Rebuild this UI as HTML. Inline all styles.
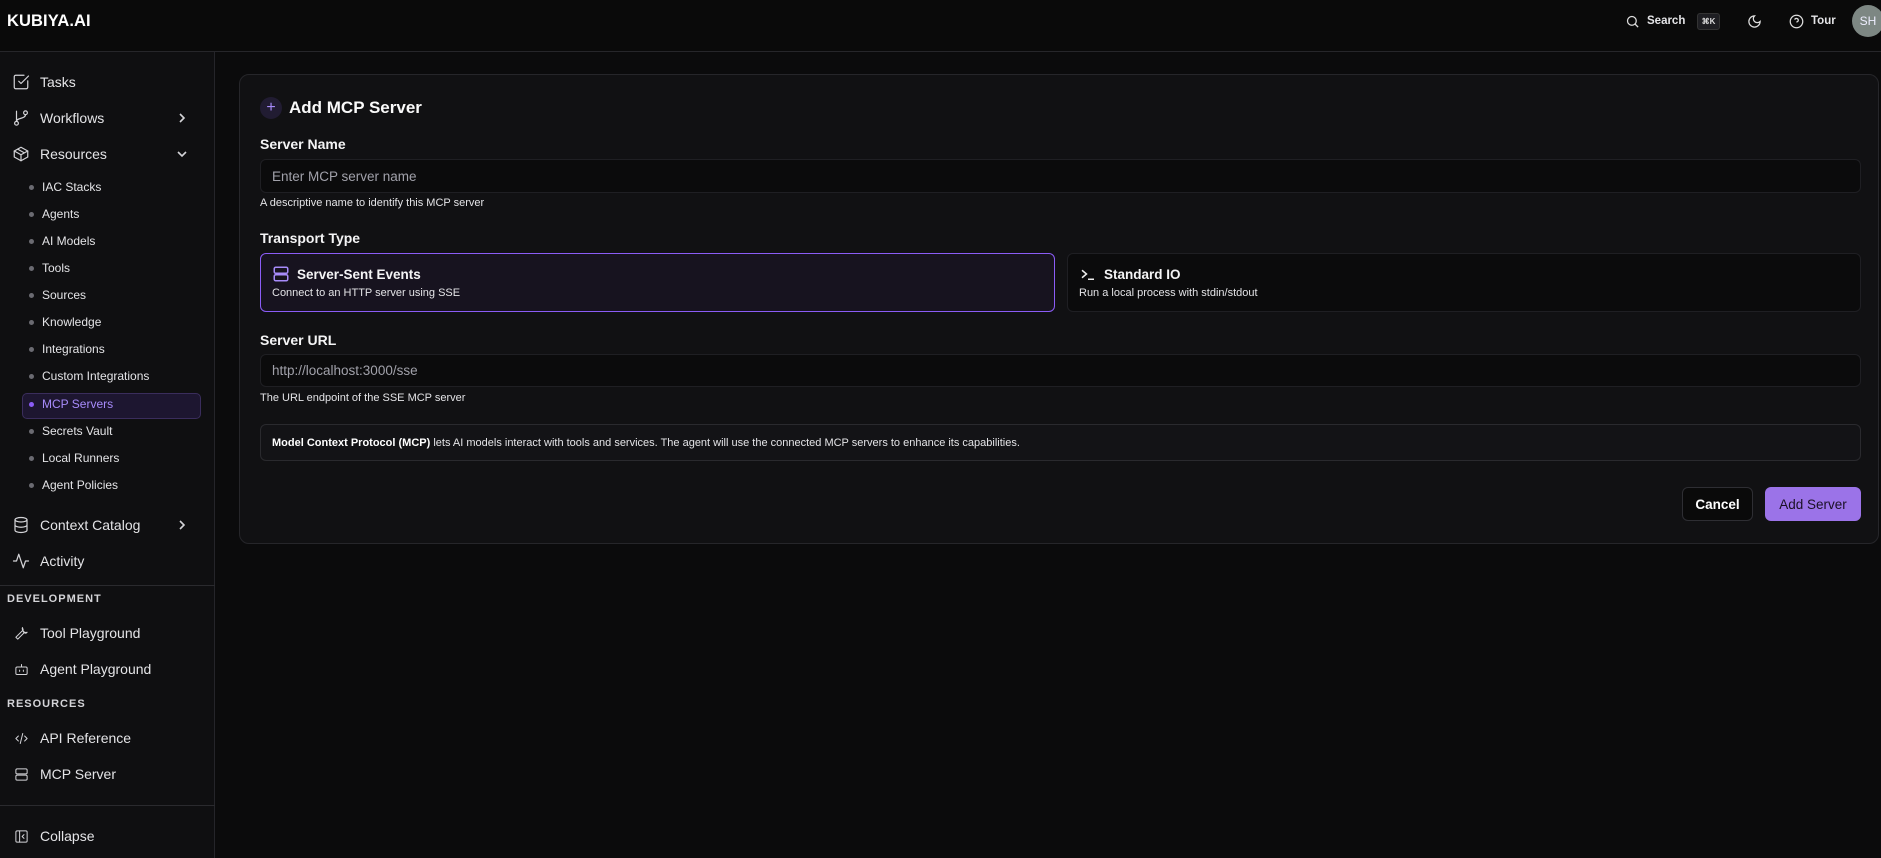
<!DOCTYPE html>
<html><head><meta charset="utf-8"><style>
*{box-sizing:border-box;margin:0;padding:0}
body{width:1881px;height:858px;overflow:hidden;background:#0b0b0c;font-family:"Liberation Sans",sans-serif;color:#ececee;position:relative}
.a{position:absolute}
.hdr{left:0;top:0;width:1881px;height:52px;background:#0a0a0a;border-bottom:1px solid #26262a}
.logo{left:7px;top:12px;font-size:16.5px;font-weight:700;color:#fff;letter-spacing:.1px}
.side{left:0;top:52px;width:215px;height:806px;background:#0f0f11;border-right:1px solid #25252a}
.ni{left:12px;font-size:14px;color:#e4e4e7;display:flex;align-items:center;height:24px}
.ni svg{width:18px;height:18px;margin-right:10px;stroke:#d4d4d8;fill:none;stroke-width:1.6;stroke-linecap:round;stroke-linejoin:round;flex:none}
.ni svg.s{width:15px;height:15px;margin:0 11px 0 2px}
.chev{left:176px;width:12px;height:12px;stroke:#d4d4d8;fill:none;stroke-width:1.6}
.si{left:29px;font-size:12px;color:#e4e4e7;display:flex;align-items:center;height:18px}
.si i{width:5px;height:5px;border-radius:50%;background:#6b6b72;margin-right:8px;display:inline-block}
.sec{left:7px;font-size:11px;font-weight:700;letter-spacing:1px;color:#d4d4d8}
.hr{left:0;width:215px;height:1px;background:#2a2a2e}
.card{left:239px;top:74px;width:1640px;height:470px;background:#111113;border:1px solid #26262a;border-radius:10px}
.lbl{left:260px;font-size:14px;font-weight:700;color:#f4f4f5}
.inp{left:260px;width:1601px;background:#0b0b0c;border:1px solid #1f1f23;border-radius:6px;font-size:13.5px;color:#a1a1aa;padding-left:11px;display:flex;align-items:center}
.help{left:260px;font-size:11px;color:#e4e4e7}
.opt{top:253px;height:59px;border-radius:6px;padding:11px 11px}
.opt .t{font-size:13.5px;font-weight:700;color:#f4f4f5;display:flex;align-items:center;height:18px}
.opt .d{font-size:11px;color:#e4e4e7;margin-top:4px}
.btn{top:487px;height:34px;border-radius:6px;font-size:13.5px;font-weight:700;display:flex;align-items:center;justify-content:center}
</style></head><body>
<div class="a hdr"></div>
<div class="a logo">KUBIYA.AI</div>
<svg class="a" style="left:1625px;top:14px" width="15" height="15" viewBox="0 0 24 24" fill="none" stroke="#ddd" stroke-width="2"><circle cx="11" cy="11" r="7"/><path d="M21 21l-5-5"/></svg>
<div class="a" style="left:1647px;top:15px;font-size:11.5px;font-weight:700;color:#e4e4e7">Search</div>
<div class="a" style="left:1697px;top:13px;width:23px;height:17px;background:#1e1e22;border:1px solid #333;border-radius:3px;font-size:8px;color:#ddd;display:flex;align-items:center;justify-content:center;font-weight:700">⌘K</div>
<svg class="a" style="left:1747px;top:14px" width="15" height="15" viewBox="0 0 24 24" fill="none" stroke="#ddd" stroke-width="2"><path d="M12 3a6 6 0 0 0 9 9 9 9 0 1 1-9-9z"/></svg>
<svg class="a" style="left:1789px;top:14px" width="15" height="15" viewBox="0 0 24 24" fill="none" stroke="#ddd" stroke-width="2"><circle cx="12" cy="12" r="10"/><path d="M9.1 9a3 3 0 0 1 5.8 1c0 2-3 3-3 3M12 17h.01"/></svg>
<div class="a" style="left:1811px;top:15px;font-size:11.5px;font-weight:700;color:#e4e4e7">Tour</div>
<div class="a" style="left:1852px;top:5px;width:32px;height:32px;border-radius:50%;background:#7d8783;color:#eef;font-size:12px;display:flex;align-items:center;justify-content:center">SH</div>

<div class="a side"></div>
<div class="a ni" style="top:70px"><svg viewBox="0 0 24 24"><path d="M21 10.5V19a2 2 0 0 1-2 2H5a2 2 0 0 1-2-2V5a2 2 0 0 1 2-2h11"/><path d="M9 11l3 3L22 4"/></svg>Tasks</div>
<div class="a ni" style="top:106px"><svg viewBox="0 0 24 24"><circle cx="6" cy="19" r="2.5"/><circle cx="18" cy="5" r="2.5"/><path d="M6 3v13.5M18 7.5c0 6-12 4-12 9"/></svg>Workflows</div>
<svg class="a chev" style="top:112px" viewBox="0 0 12 12"><path d="M4 2l4 4-4 4"/></svg>
<div class="a ni" style="top:142px"><svg viewBox="0 0 24 24"><path d="M21 8l-9-5-9 5v8l9 5 9-5z"/><path d="M3 8l9 5 9-5M12 13v8M7.5 5.5l9 5"/></svg>Resources</div>
<svg class="a chev" style="top:148px" viewBox="0 0 12 12"><path d="M2 4l4 4 4-4"/></svg>
<div class="a si" style="top:178px"><i></i>IAC Stacks</div>
<div class="a si" style="top:205px"><i></i>Agents</div>
<div class="a si" style="top:232px"><i></i>AI Models</div>
<div class="a si" style="top:259px"><i></i>Tools</div>
<div class="a si" style="top:286px"><i></i>Sources</div>
<div class="a si" style="top:313px"><i></i>Knowledge</div>
<div class="a si" style="top:340px"><i></i>Integrations</div>
<div class="a si" style="top:367px"><i></i>Custom Integrations</div>
<div class="a" style="left:22px;top:393px;width:179px;height:26px;background:#1d1630;border:1px solid #3a2d5c;border-radius:5px"></div>
<div class="a si" style="top:395px;color:#a78bfa"><i style="background:#8b5cf6"></i>MCP Servers</div>
<div class="a si" style="top:422px"><i></i>Secrets Vault</div>
<div class="a si" style="top:449px"><i></i>Local Runners</div>
<div class="a si" style="top:476px"><i></i>Agent Policies</div>
<div class="a ni" style="top:513px"><svg viewBox="0 0 24 24"><ellipse cx="12" cy="5" rx="8" ry="3"/><path d="M4 5v14c0 1.7 3.6 3 8 3s8-1.3 8-3V5M4 12c0 1.7 3.6 3 8 3s8-1.3 8-3"/></svg>Context Catalog</div>
<svg class="a chev" style="top:519px" viewBox="0 0 12 12"><path d="M4 2l4 4-4 4"/></svg>
<div class="a ni" style="top:549px"><svg viewBox="0 0 24 24"><path d="M22 12h-4l-3 9L9 3l-3 9H2"/></svg>Activity</div>
<div class="a hr" style="top:585px"></div>
<div class="a sec" style="top:593px">DEVELOPMENT</div>
<div class="a ni" style="top:621px"><svg class="s" viewBox="0 0 24 24"><path d="M14.7 6.3a4 4 0 0 0 5 5L21 10a6 6 0 0 1-7.5-7.5L14.7 6.3zM13 8l-10 10 3 3 10-10"/></svg>Tool Playground</div>
<div class="a ni" style="top:657px"><svg class="s" viewBox="0 0 24 24"><rect x="3" y="8" width="18" height="12" rx="2"/><path d="M12 8V4M9 13v2M15 13v2"/></svg>Agent Playground</div>
<div class="a sec" style="top:698px">RESOURCES</div>
<div class="a ni" style="top:726px"><svg class="s" viewBox="0 0 24 24"><path d="M7 8l-4 4 4 4M17 8l4 4-4 4M14 4l-4 16"/></svg>API Reference</div>
<div class="a ni" style="top:762px"><svg class="s" viewBox="0 0 24 24"><rect x="3" y="3" width="18" height="8" rx="2"/><rect x="3" y="13" width="18" height="8" rx="2"/></svg>MCP Server</div>
<div class="a hr" style="top:805px"></div>
<div class="a ni" style="top:824px"><svg class="s" viewBox="0 0 24 24"><rect x="3" y="3" width="18" height="18" rx="2"/><path d="M9 3v18M16 9l-3 3 3 3"/></svg>Collapse</div>

<div class="a card"></div>
<div class="a" style="left:260px;top:97px;width:22px;height:22px;border-radius:50%;background:#211c32;color:#a78bfa;font-size:16px;display:flex;align-items:center;justify-content:center">+</div>
<div class="a" style="left:289px;top:98px;font-size:17px;font-weight:700;color:#fafafa">Add MCP Server</div>
<div class="a lbl" style="top:136px">Server Name</div>
<div class="a inp" style="top:159px;height:34px">Enter MCP server name</div>
<div class="a help" style="top:197px">A descriptive name to identify this MCP server</div>
<div class="a lbl" style="top:230px">Transport Type</div>
<div class="a opt" style="left:260px;width:795px;background:#17131f;border:1px solid #8b5cf6">
<div class="t"><svg width="18" height="18" viewBox="0 0 24 24" fill="none" stroke="#a78bfa" stroke-width="2" style="margin-right:7px"><rect x="3" y="3" width="18" height="8" rx="2"/><rect x="3" y="13" width="18" height="8" rx="2"/><path d="M6 7h.01M6 17h.01"/></svg>Server-Sent Events</div>
<div class="d">Connect to an HTTP server using SSE</div></div>
<div class="a opt" style="left:1067px;width:794px;background:#0b0b0c;border:1px solid #1f1f23">
<div class="t"><svg width="18" height="18" viewBox="0 0 24 24" fill="none" stroke="#eee" stroke-width="2" style="margin-right:7px"><path d="M4 17l6-5-6-5M12 19h8"/></svg>Standard IO</div>
<div class="d">Run a local process with stdin/stdout</div></div>
<div class="a lbl" style="top:332px">Server URL</div>
<div class="a inp" style="top:354px;height:33px">http://localhost:3000/sse</div>
<div class="a help" style="top:392px">The URL endpoint of the SSE MCP server</div>
<div class="a" style="left:260px;top:424px;width:1601px;height:37px;border:1px solid #2a2a2e;border-radius:6px;background:#131316;font-size:11px;color:#e4e4e7;padding-left:11px;display:flex;align-items:center"><b style="color:#fff">Model Context Protocol (MCP)</b>&nbsp;lets AI models interact with tools and services. The agent will use the connected MCP servers to enhance its capabilities.</div>
<div class="a btn" style="left:1682px;width:71px;background:#0a0a0a;border:1px solid #2e2e33;color:#fff">Cancel</div>
<div class="a btn" style="left:1765px;width:96px;background:#9b73e8;color:#1a1025;font-weight:400">Add Server</div>
</body></html>
